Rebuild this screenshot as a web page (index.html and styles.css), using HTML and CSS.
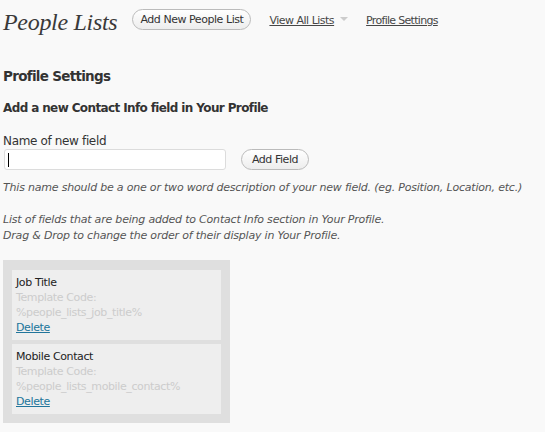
FILE: index.html
```html
<!DOCTYPE html>
<html>
<head>
<meta charset="utf-8">
<link rel="stylesheet" href="styles.css">
</head>
<body>
<div class="wrap">
  <div class="header">
    <h2 class="title">People Lists</h2>
    <a class="pill add-list">Add New People List</a>
    <a class="navlink">View All Lists</a>
    <span class="arrow"></span>
    <a class="navlink settings">Profile Settings</a>
  </div>
  <h3 class="section">Profile Settings</h3>
  <h4 class="subsection">Add a new Contact Info field in Your Profile</h4>
  <label class="label">Name of new field</label>
  <div class="field-row">
    <div class="input"><span class="caret"></span></div>
    <a class="pill add-field">Add Field</a>
  </div>
  <p class="hint">This name should be a one or two word description of your new field. (eg. Position, Location, etc.)</p>
  <p class="hint list-hint">List of fields that are being added to Contact Info section in Your Profile.<br>Drag &amp; Drop to change the order of their display in Your Profile.</p>
  <div class="fields">
    <div class="item">
      <div class="name">Job Title</div>
      <div class="code">Template Code:</div>
      <div class="code">%people_lists_job_title%</div>
      <a class="delete">Delete</a>
    </div>
    <div class="item">
      <div class="name">Mobile Contact</div>
      <div class="code">Template Code:</div>
      <div class="code">%people_lists_mobile_contact%</div>
      <a class="delete">Delete</a>
    </div>
  </div>
</div>
</body>
</html>
```
FILE: styles.css
```css
html, body {
  margin: 0;
  padding: 0;
  background: #f9f9f9;
}
body {
  font-family: "DejaVu Sans", sans-serif;
  font-size: 12px;
  letter-spacing: -0.35px;
  color: #333;
}
.wrap {
  padding: 0 3px;
}
.header {
  display: flex;
  align-items: center;
  height: 38px;
}
.title {
  margin: 7px 15px 0 0;
  font-family: "Liberation Serif", serif;
  font-style: italic;
  font-weight: normal;
  font-size: 24px;
  letter-spacing: -0.3px;
  color: #3a3a3a;
}
.pill {
  display: inline-flex;
  align-items: center;
  justify-content: center;
  box-sizing: border-box;
  height: 21px;
  border: 1px solid #bbb;
  border-radius: 11px;
  background: linear-gradient(#ffffff, #ededed);
  font-size: 11px;
  letter-spacing: -0.45px;
  color: #333;
  white-space: nowrap;
}
.add-list {
  width: 119px;
}
.navlink {
  font-size: 11px;
  letter-spacing: -0.5px;
  color: #464646;
  text-decoration: underline;
  margin-left: 18px;
  margin-top: 2px;
}
.arrow {
  width: 0;
  height: 0;
  border-left: 4px solid transparent;
  border-right: 4px solid transparent;
  border-top: 4px solid #ccc;
  margin-left: 6px;
}
.settings {
  margin-left: 18px;
  letter-spacing: -0.7px;
}
.section {
  margin: 28px 0 0;
  line-height: 20px;
  font-size: 13.5px;
  letter-spacing: -0.7px;
  font-weight: bold;
  color: #333;
}
.subsection {
  margin: 14px 0 0;
  line-height: 16px;
  font-size: 12px;
  letter-spacing: -0.62px;
  font-weight: bold;
  color: #333;
}
.label {
  display: block;
  margin-top: 17px;
  line-height: 16px;
  font-size: 12px;
  color: #333;
}
.field-row {
  display: flex;
  align-items: flex-start;
  height: 21px;
}
.input {
  box-sizing: border-box;
  width: 222px;
  height: 21px;
  margin-left: 1px;
  background: #fff;
  border: 1px solid #dcdcdc;
  border-radius: 3px;
  display: flex;
  align-items: center;
  padding-left: 3px;
}
.caret {
  width: 1px;
  height: 14px;
  background: #000;
}
.add-field {
  width: 68px;
  margin-left: 15px;
}
.hint {
  margin: 10px 0 0;
  font-style: italic;
  font-size: 11px;
  letter-spacing: -0.2px;
  color: #555;
  line-height: 16px;
}
.list-hint {
  margin-top: 16px;
}
.fields {
  box-sizing: border-box;
  width: 227px;
  margin-top: 16px;
  background: #dfdfdf;
  padding: 10px 9px 9px;
  display: flex;
  flex-direction: column;
  gap: 4px;
}
.item {
  background: #eee;
  padding: 5px 4px;
  line-height: 15px;
  font-size: 11px;
  letter-spacing: -0.38px;
}
.name {
  color: #222;
}
.code {
  color: #ccc;
}
.delete {
  color: #21759b;
  text-decoration: underline;
}
```
